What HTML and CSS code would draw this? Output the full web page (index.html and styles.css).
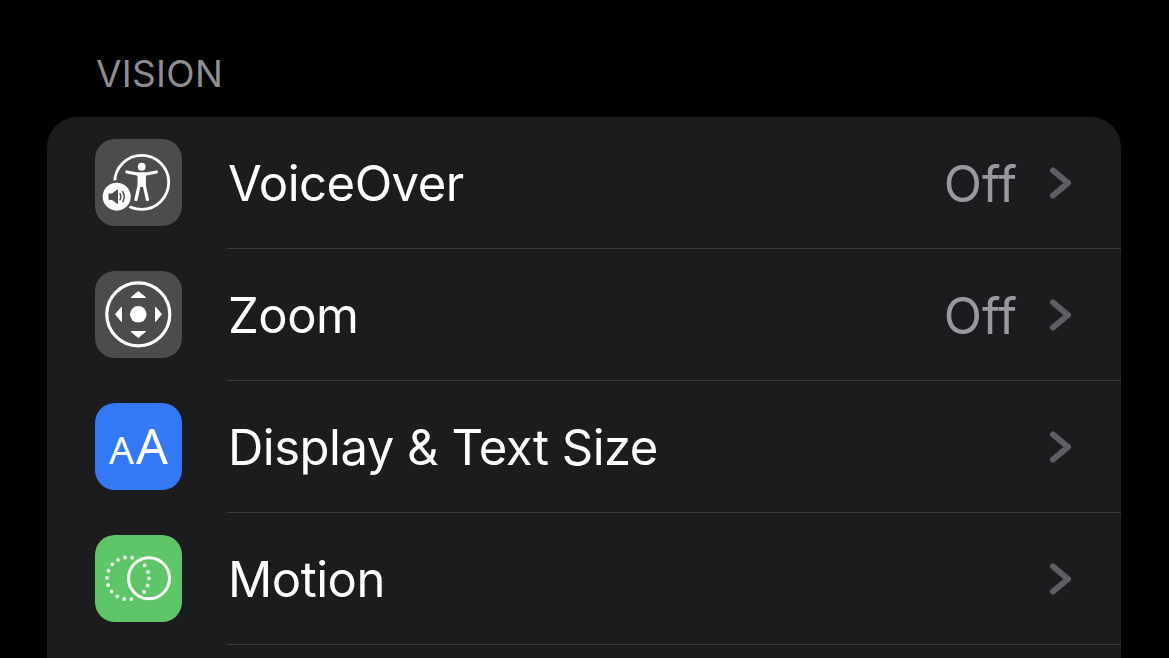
FILE: index.html
```html
<!DOCTYPE html>
<html lang="en">
<head>
    <meta http-equiv="content-type" content="text/html; charset=utf-8"/>
    <title>Accessibility</title>
    <link rel="stylesheet" href="styles.css">
</head>
<body>

<h2 class="sectionTitle">VISION</h2>

<div class="card">

    <div class="row">
        <div class="icon grey">
            <svg viewBox="0 0 87 87" width="87" height="87">
                <circle cx="46.7" cy="43.3" r="27" fill="none" stroke="#fff" stroke-width="2.8"/>
                <circle cx="46.7" cy="27.7" r="3.9" fill="#fff"/>
                <path d="M32 33 L42 35 H51.4 L61.4 33 M44.2 35.5 V46 L41 60.5 M49.2 35.5 V46 L52.4 60.5" fill="none" stroke="#fff" stroke-width="3.3" stroke-linecap="round" stroke-linejoin="round"/>
                <path d="M43 36 H50.4 V48 H43 Z" fill="#fff"/>
                <circle cx="21.7" cy="57.7" r="16.5" fill="#4c4c4c"/>
                <circle cx="21.7" cy="57.7" r="14" fill="#fff"/>
                <path d="M14 55 H17 L22.5 50.8 V64.6 L17 60.4 H14 Z" fill="#4c4c4c" stroke="#4c4c4c" stroke-width="1" stroke-linejoin="round"/>
                <path d="M25 54.6 Q26.8 57.7 25 60.8 M27.8 52.6 Q30.6 57.7 27.8 62.8" fill="none" stroke="#4c4c4c" stroke-width="1.4" stroke-linecap="round"/>
            </svg>
        </div>
        <div class="rowBody">
            <span class="label">VoiceOver</span>
            <span class="value">Off</span>
            <svg class="chevron" viewBox="0 0 23 32" width="23" height="32"><path d="M4 3.5 L19 16 L4 28.5"/></svg>
        </div>
    </div>

    <div class="row">
        <div class="icon grey">
            <svg viewBox="0 0 87 87" width="87" height="87">
                <circle cx="43.3" cy="43.3" r="31.5" fill="none" stroke="#fff" stroke-width="3.2"/>
                <circle cx="43.3" cy="43.3" r="8.3" fill="#fff"/>
                <path d="M43.3 20.5 L50.5 26.5 H36.1 Z M43.3 66.5 L50.5 60.5 H36.1 Z M20.5 43.3 L26.5 36.1 V50.5 Z M66.5 43.3 L60.5 36.1 V50.5 Z" fill="#fff" stroke="#fff" stroke-width="1" stroke-linejoin="round"/>
            </svg>
        </div>
        <div class="rowBody">
            <span class="label">Zoom</span>
            <span class="value">Off</span>
            <svg class="chevron" viewBox="0 0 23 32" width="23" height="32"><path d="M4 3.5 L19 16 L4 28.5"/></svg>
        </div>
    </div>

    <div class="row">
        <div class="icon blue">
            <span class="smallA">A</span><span class="bigA">A</span>
        </div>
        <div class="rowBody">
            <span class="label">Display &amp; Text Size</span>
            <svg class="chevron" viewBox="0 0 23 32" width="23" height="32"><path d="M4 3.5 L19 16 L4 28.5"/></svg>
        </div>
    </div>

    <div class="row">
        <div class="icon green">
            <svg viewBox="0 0 87 87" width="87" height="87">
                <circle cx="33" cy="43.3" r="21" fill="none" stroke="#fff" stroke-width="3.8" stroke-linecap="round" stroke-dasharray="0 7.33"/>
                <circle cx="54" cy="43.3" r="20.5" fill="none" stroke="#5ec668" stroke-width="6"/>
                <circle cx="54" cy="43.3" r="20.5" fill="none" stroke="#fff" stroke-width="3"/>
            </svg>
        </div>
        <div class="rowBody">
            <span class="label">Motion</span>
            <svg class="chevron" viewBox="0 0 23 32" width="23" height="32"><path d="M4 3.5 L19 16 L4 28.5"/></svg>
        </div>
    </div>

</div>

</body>
</html>
```

FILE: styles.css
```css
html, body {
    margin: 0;
    height: 658px;
    overflow: hidden;
    background: #000;
    font-family: Inter, "Liberation Sans", sans-serif;
}

.sectionTitle {
    margin: 0;
    padding: 52px 0 21px 96px;
    font-size: 37px;
    line-height: 44px;
    letter-spacing: 0.3px;
    font-weight: 400;
    color: #8d8d93;
}

.card {
    margin: 0 48px 0 47px;
    padding-bottom: 40px;
    background: #1c1c1e;
    border-radius: 30px;
}

.row {
    display: flex;
    align-items: center;
    padding-left: 48px;
}

.icon {
    flex: none;
    width: 87px;
    height: 87px;
    margin-right: 45px;
    margin-bottom: 2px;
    border-radius: 20px;
    overflow: hidden;
}

.icon svg {
    display: block;
}

.grey {
    background: #4c4c4c;
}

.blue {
    display: flex;
    justify-content: center;
    align-items: baseline;
    gap: 2px;
    background: #3478f6;
    color: #fff;
    font-family: "Noto Sans", sans-serif;
    line-height: 85px;
}

.green {
    background: #5ec668;
}

.smallA {
    font-size: 39px;
}

.bigA {
    font-size: 50px;
}

.rowBody {
    flex: 1;
    display: flex;
    align-items: center;
    height: 131px;
    padding-right: 49px;
    border-bottom: 1px solid #3a3a3c;
}

.label {
    flex: 1;
    padding: 2px 0 0 1px;
    font-size: 49px;
    letter-spacing: -0.5px;
    color: #fff;
}

.value {
    padding-top: 3px;
    font-size: 50px;
    color: #98989f;
    margin-right: 32px;
}

.chevron {
    flex: none;
    fill: none;
    stroke: #5f5f63;
    stroke-width: 6;
    stroke-linecap: round;
    stroke-linejoin: round;
}
```
